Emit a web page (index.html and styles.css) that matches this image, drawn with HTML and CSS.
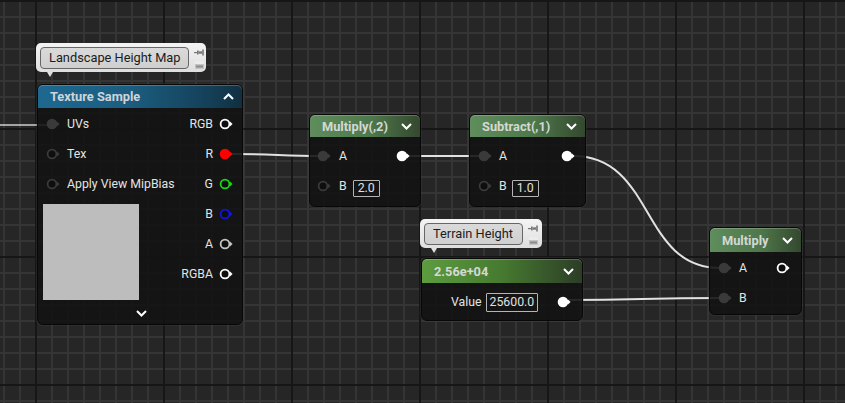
FILE: index.html
```html
<!DOCTYPE html>
<html>
<head>
<meta charset="utf-8">
<link rel="stylesheet" href="styles.css">
</head>
<body>
<div class="canvas">
  <svg class="wires" width="845" height="403" viewBox="0 0 845 403">
    <path class="wire dim" d="M0 125 L47 125"/>
    <path class="wire" d="M232 154 C 270 154, 285 156, 320 156"/>
    <path class="wire" d="M408 156 L480 156"/>
    <path class="wire" d="M573 156 C 655 156, 640 268, 720 268"/>
    <path class="wire" d="M569 300 C 640 300, 645 298, 720 298"/>
  </svg>

  <div class="comment c-land">
    <div class="comment-box">Landscape Height Map</div>
    <div class="comment-icons">
      <svg width="10" height="7" viewBox="0 0 10 7"><rect x="0" y="3" width="3" height="1.2" fill="#777"/><rect x="3" y="1.5" width="1.6" height="4" fill="#777"/><rect x="4.6" y="2.3" width="3.6" height="2.4" fill="#777"/><rect x="8.2" y="0.5" width="1.6" height="6" fill="#777"/></svg>
      <svg width="9" height="8" viewBox="0 0 9 8"><rect x="0" y="0" width="9" height="8" fill="#c4c4c4"/><rect x="0" y="0" width="9" height="3" fill="#ececec"/><rect x="1" y="4.5" width="7" height="2" fill="#8a8a8a"/></svg>
    </div>
  </div>

  <div class="node tex">
    <div class="hdr hdr-blue">
      <span class="title">Texture Sample</span>
      <svg class="chev" width="11" height="7" viewBox="0 0 11 7"><polyline points="1,6 5.5,1.5 10,6" fill="none" stroke="#fff" stroke-width="2"/></svg>
    </div>
    <div class="tex-body">
      <div class="col-in">
        <div class="row in"><svg width="15" height="12" viewBox="0 0 15 12"><circle cx="6" cy="6" r="5.3" fill="#3a3a3a"/><polygon points="11,3.6 13.6,6 11,8.4" fill="#3a3a3a"/></svg><span>UVs</span></div>
        <div class="row in"><svg width="15" height="12" viewBox="0 0 15 12"><circle cx="6" cy="6" r="4.4" fill="#0e0e0e" stroke="#3a3a3a" stroke-width="1.8"/><polygon points="11,3.6 13.6,6 11,8.4" fill="#3a3a3a"/></svg><span>Tex</span></div>
        <div class="row in"><svg width="15" height="12" viewBox="0 0 15 12"><circle cx="6" cy="6" r="4.4" fill="#0e0e0e" stroke="#3a3a3a" stroke-width="1.8"/><polygon points="11,3.6 13.6,6 11,8.4" fill="#3a3a3a"/></svg><span>Apply View MipBias</span></div>
        <div class="preview"></div>
      </div>
      <div class="col-out">
        <div class="row out"><span>RGB</span><svg width="15" height="12" viewBox="0 0 15 12"><circle cx="6" cy="6" r="4.4" fill="#0e0e0e" stroke="#ffffff" stroke-width="1.8"/><polygon points="11,3.6 13.6,6 11,8.4" fill="#ffffff"/></svg></div>
        <div class="row out"><span>R</span><svg width="15" height="12" viewBox="0 0 15 12"><circle cx="6" cy="6" r="5.3" fill="#ff0000"/><polygon points="11,3.6 13.6,6 11,8.4" fill="#ff0000"/></svg></div>
        <div class="row out"><span>G</span><svg width="15" height="12" viewBox="0 0 15 12"><circle cx="6" cy="6" r="4.4" fill="#0e0e0e" stroke="#19d419" stroke-width="1.8"/><polygon points="11,3.6 13.6,6 11,8.4" fill="#19d419"/></svg></div>
        <div class="row out"><span>B</span><svg width="15" height="12" viewBox="0 0 15 12"><circle cx="6" cy="6" r="4.4" fill="#0e0e0e" stroke="#1414e0" stroke-width="1.8"/><polygon points="11,3.6 13.6,6 11,8.4" fill="#1414e0"/></svg></div>
        <div class="row out"><span>A</span><svg width="15" height="12" viewBox="0 0 15 12"><circle cx="6" cy="6" r="4.4" fill="#0e0e0e" stroke="#c4c4c4" stroke-width="1.8"/><polygon points="11,3.6 13.6,6 11,8.4" fill="#c4c4c4"/></svg></div>
        <div class="row out"><span>RGBA</span><svg width="15" height="12" viewBox="0 0 15 12"><circle cx="6" cy="6" r="4.4" fill="#0e0e0e" stroke="#ffffff" stroke-width="1.8"/><polygon points="11,3.6 13.6,6 11,8.4" fill="#ffffff"/></svg></div>
      </div>
    </div>
    <div class="footer">
      <svg width="11" height="7" viewBox="0 0 11 7"><polyline points="1,1 5.5,5.5 10,1" fill="none" stroke="#fff" stroke-width="2"/></svg>
    </div>
  </div>

  <div class="node math mul2">
    <div class="hdr hdr-green">
      <span class="title">Multiply(,2)</span>
      <svg class="chev" width="11" height="7" viewBox="0 0 11 7"><polyline points="1,1 5.5,5.5 10,1" fill="none" stroke="#fff" stroke-width="2"/></svg>
    </div>
    <div class="math-body">
      <div class="col-in">
        <div class="row in"><svg width="15" height="12" viewBox="0 0 15 12"><circle cx="6" cy="6" r="5.3" fill="#3a3a3a"/><polygon points="11,3.6 13.6,6 11,8.4" fill="#3a3a3a"/></svg><span>A</span></div>
        <div class="row in"><svg width="15" height="12" viewBox="0 0 15 12"><circle cx="6" cy="6" r="4.4" fill="#0e0e0e" stroke="#3a3a3a" stroke-width="1.8"/><polygon points="11,3.6 13.6,6 11,8.4" fill="#3a3a3a"/></svg><span>B</span><span class="val">2.0</span></div>
      </div>
      <div class="col-out">
        <div class="row out"><svg width="15" height="12" viewBox="0 0 15 12"><circle cx="6" cy="6" r="5.3" fill="#ffffff"/><polygon points="11,3.6 13.6,6 11,8.4" fill="#ffffff"/></svg></div>
      </div>
    </div>
  </div>

  <div class="node math sub1">
    <div class="hdr hdr-green">
      <span class="title">Subtract(,1)</span>
      <svg class="chev" width="11" height="7" viewBox="0 0 11 7"><polyline points="1,1 5.5,5.5 10,1" fill="none" stroke="#fff" stroke-width="2"/></svg>
    </div>
    <div class="math-body">
      <div class="col-in">
        <div class="row in"><svg width="15" height="12" viewBox="0 0 15 12"><circle cx="6" cy="6" r="5.3" fill="#3a3a3a"/><polygon points="11,3.6 13.6,6 11,8.4" fill="#3a3a3a"/></svg><span>A</span></div>
        <div class="row in"><svg width="15" height="12" viewBox="0 0 15 12"><circle cx="6" cy="6" r="4.4" fill="#0e0e0e" stroke="#3a3a3a" stroke-width="1.8"/><polygon points="11,3.6 13.6,6 11,8.4" fill="#3a3a3a"/></svg><span>B</span><span class="val">1.0</span></div>
      </div>
      <div class="col-out">
        <div class="row out"><svg width="15" height="12" viewBox="0 0 15 12"><circle cx="6" cy="6" r="5.3" fill="#ffffff"/><polygon points="11,3.6 13.6,6 11,8.4" fill="#ffffff"/></svg></div>
      </div>
    </div>
  </div>

  <div class="comment c-terrain">
    <div class="comment-box">Terrain Height</div>
    <div class="comment-icons">
      <svg width="10" height="7" viewBox="0 0 10 7"><rect x="0" y="3" width="3" height="1.2" fill="#777"/><rect x="3" y="1.5" width="1.6" height="4" fill="#777"/><rect x="4.6" y="2.3" width="3.6" height="2.4" fill="#777"/><rect x="8.2" y="0.5" width="1.6" height="6" fill="#777"/></svg>
      <svg width="9" height="8" viewBox="0 0 9 8"><rect x="0" y="0" width="9" height="8" fill="#c4c4c4"/><rect x="0" y="0" width="9" height="3" fill="#ececec"/><rect x="1" y="4.5" width="7" height="2" fill="#8a8a8a"/></svg>
    </div>
  </div>

  <div class="node terrain">
    <div class="hdr hdr-lime">
      <span class="title">2.56e+04</span>
      <svg class="chev" width="11" height="7" viewBox="0 0 11 7"><polyline points="1,1 5.5,5.5 10,1" fill="none" stroke="#fff" stroke-width="2"/></svg>
    </div>
    <div class="terrain-body">
      <span>Value</span><span class="val">25600.0</span>
      <svg class="outpin" width="15" height="12" viewBox="0 0 15 12"><circle cx="6" cy="6" r="5.3" fill="#ffffff"/><polygon points="11,3.6 13.6,6 11,8.4" fill="#ffffff"/></svg>
    </div>
  </div>

  <div class="node math mulf">
    <div class="hdr hdr-green">
      <span class="title">Multiply</span>
      <svg class="chev" width="11" height="7" viewBox="0 0 11 7"><polyline points="1,1 5.5,5.5 10,1" fill="none" stroke="#fff" stroke-width="2"/></svg>
    </div>
    <div class="math-body">
      <div class="col-in">
        <div class="row in"><svg width="15" height="12" viewBox="0 0 15 12"><circle cx="6" cy="6" r="5.3" fill="#3a3a3a"/><polygon points="11,3.6 13.6,6 11,8.4" fill="#3a3a3a"/></svg><span>A</span></div>
        <div class="row in"><svg width="15" height="12" viewBox="0 0 15 12"><circle cx="6" cy="6" r="5.3" fill="#3a3a3a"/><polygon points="11,3.6 13.6,6 11,8.4" fill="#3a3a3a"/></svg><span>B</span></div>
      </div>
      <div class="col-out">
        <div class="row out"><svg width="15" height="12" viewBox="0 0 15 12"><circle cx="6" cy="6" r="4.4" fill="#0e0e0e" stroke="#ffffff" stroke-width="1.8"/><polygon points="11,3.6 13.6,6 11,8.4" fill="#ffffff"/></svg></div>
      </div>
    </div>
  </div>
</div>
</body>
</html>
```

FILE: styles.css
```css
* { box-sizing: border-box; }
html, body { margin: 0; padding: 0; }
body {
  width: 845px;
  height: 403px;
  overflow: hidden;
  font-family: Roboto, "Liberation Sans", sans-serif;
  font-size: 12.3px;
  color: #e4e4e4;
}
.canvas {
  position: relative;
  width: 845px;
  height: 403px;
  background-color: #262626;
  background-image:
    linear-gradient(to right, #161616 2px, transparent 2px),
    linear-gradient(to bottom, #161616 2px, transparent 2px),
    linear-gradient(to right, #353535 2px, transparent 2px),
    linear-gradient(to bottom, #353535 2px, transparent 2px);
  background-size: 128px 100%, 100% 128px, 16px 100%, 100% 16px;
  background-position: 35px 0, 0 0, 3px 0, 0 0;
}
.wires { position: absolute; left: 0; top: 0; }
.wire { fill: none; stroke: #e2e2e2; stroke-width: 2; }
.wire.dim { stroke: #cfcfcf; stroke-width: 1.6; }

/* comment bubbles */
.comment {
  position: absolute;
  display: flex;
  align-items: flex-start;
  gap: 4px;
  padding: 4px;
  background: linear-gradient(#f4f4f4, #dedede);
  border-radius: 5px;
}
.comment::after {
  content: "";
  position: absolute;
  left: 11px;
  bottom: -5px;
  border-left: 3px solid transparent;
  border-right: 3px solid transparent;
  border-top: 5px solid #e0e0e0;
}
.c-land { left: 36px; top: 43px; width: 170px; height: 29px; }
.c-terrain { left: 420px; top: 219px; width: 122px; height: 29px; }
.comment-box {
  height: 22px;
  line-height: 20px;
  padding: 0 8px;
  border: 1px solid #666;
  border-radius: 4px;
  background: linear-gradient(#dadada, #cfcfcf);
  color: #1c1c1c;
  font-size: 12.8px;
  white-space: nowrap;
}
.c-land .comment-box { width: 149px; }
.c-terrain .comment-box { width: 99px; }
.comment-icons {
  display: flex;
  flex-direction: column;
  align-items: center;
  gap: 5px;
  padding-top: 2px;
  padding-left: 1px;
}

/* nodes */
.node {
  position: absolute;
  display: flex;
  flex-direction: column;
  background: rgba(18, 19, 18, 0.9);
  border: 1px solid #080808;
  border-radius: 6px;
  box-shadow: 0 0 0 1px rgba(70, 70, 70, 0.25);
}
.hdr {
  display: flex;
  align-items: center;
  justify-content: space-between;
  padding: 0 8px 0 12px;
  border-radius: 5px 5px 0 0;
  box-shadow: inset 0 1px 0 rgba(255, 255, 255, 0.22);
}
.title {
  font-weight: bold;
  font-size: 12.8px;
  color: #d4d8d4;
  white-space: nowrap;
}
.hdr-blue {
  height: 23px;
  background: linear-gradient(to right, #1e6890 0%, #1b5d80 45%, #143f57 85%, #112f40 100%);
}
.hdr-blue .title { color: #d0d4d8; }
.hdr-green {
  height: 22px;
  background: linear-gradient(to right, #5f8d5c 0%, #4e784b 55%, #34482f 100%);
}
.hdr-lime {
  height: 24px;
  background: linear-gradient(to right, #5d9c3e 0%, #467a30 50%, #2c3d26 100%);
}
.mulf .hdr-green { height: 24px; }

.row {
  display: flex;
  align-items: center;
  height: 30px;
  white-space: nowrap;
}
.row.in { gap: 6px; }
.row.out { justify-content: flex-end; gap: 6px; }
.row svg { flex: none; }

/* texture sample */
.tex { left: 37px; top: 84px; width: 206px; height: 241px; }
.tex-body {
  display: flex;
  justify-content: space-between;
  padding: 1px 8px 0 8px;
}
.preview {
  width: 96px;
  height: 96px;
  margin-top: 5px;
  margin-left: -3px;
  background: #bdbdbd;
}
.footer {
  margin-top: auto;
  height: 22px;
  display: flex;
  align-items: center;
  justify-content: center;
  padding-left: 2px;
}

/* math nodes */
.math-body {
  display: flex;
  justify-content: space-between;
  padding: 4px 9px 0 7px;
}
.val {
  margin-left: -1px;
  height: 17px;
  line-height: 15px;
  padding: 0 4px;
  border: 1px solid #b5b5b5;
  border-radius: 1px;
  color: #e0e0e0;
  position: relative;
  top: 2px;
}
.mul2 { left: 309px; top: 114px; width: 112px; height: 93px; }
.mul2 .row.in { gap: 7px; }
.sub1 { left: 469px; top: 114px; width: 117px; height: 93px; }
.sub1 .math-body { padding-left: 8px; }
.mulf { left: 709px; top: 227px; width: 93px; height: 88px; }
.mulf .math-body { padding: 1px 10px 0 8px; }

/* terrain constant */
.terrain { left: 421px; top: 258px; width: 162px; height: 63px; }
.terrain-body {
  display: flex;
  align-items: center;
  height: 30px;
  margin-top: 4px;
  padding-left: 29px;
  gap: 5px;
}
.terrain-body .val { top: 0; height: 19px; line-height: 17px; padding: 0 3px; }
.terrain-body .outpin { margin-left: 14px; }
```
